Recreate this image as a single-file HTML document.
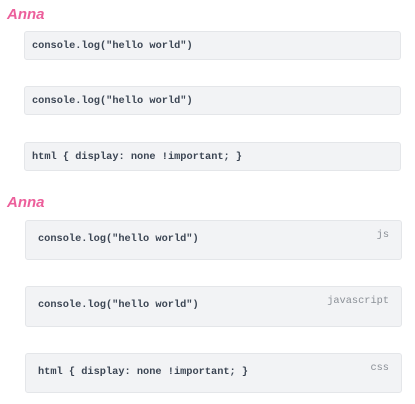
<!DOCTYPE html>
<html><head><style>
body{margin:0;background:#fff;width:415px;height:404px;position:relative;overflow:hidden}
.n{position:absolute;left:7px;font:italic bold 15px "Comic Sans MS","Liberation Sans",sans-serif;color:#ec5f9b}
.b{position:absolute;background:#f2f3f5;border:1px solid #e4e6e9;border-radius:3px;box-sizing:border-box;font:bold 10.3px "Liberation Mono",monospace;color:#3c4654;white-space:pre}
.b span{position:absolute}
.l{position:absolute;right:12px;font:10.3px "Liberation Mono",monospace;color:#8a8f96}
</style></head><body>
<div class="n" style="top:6px">Anna</div>
<div class="b" style="left:24px;top:31px;width:377px;height:29px"><span style="left:7px;top:8px">console.log("hello world")</span></div>
<div class="b" style="left:24px;top:86px;width:377px;height:29px"><span style="left:7px;top:8px">console.log("hello world")</span></div>
<div class="b" style="left:24px;top:142px;width:377px;height:29px"><span style="left:7px;top:8px">html { display: none !important; }</span></div>
<div class="n" style="top:194px">Anna</div>
<div class="b" style="left:25px;top:220px;width:377px;height:40px"><span style="left:12px;top:12px">console.log("hello world")</span><span class="l" style="top:8px">js</span></div>
<div class="b" style="left:25px;top:286px;width:377px;height:41px"><span style="left:12px;top:12px">console.log("hello world")</span><span class="l" style="top:8px">javascript</span></div>
<div class="b" style="left:25px;top:353px;width:377px;height:40px"><span style="left:12px;top:12px">html { display: none !important; }</span><span class="l" style="top:8px">css</span></div>
</body></html>
